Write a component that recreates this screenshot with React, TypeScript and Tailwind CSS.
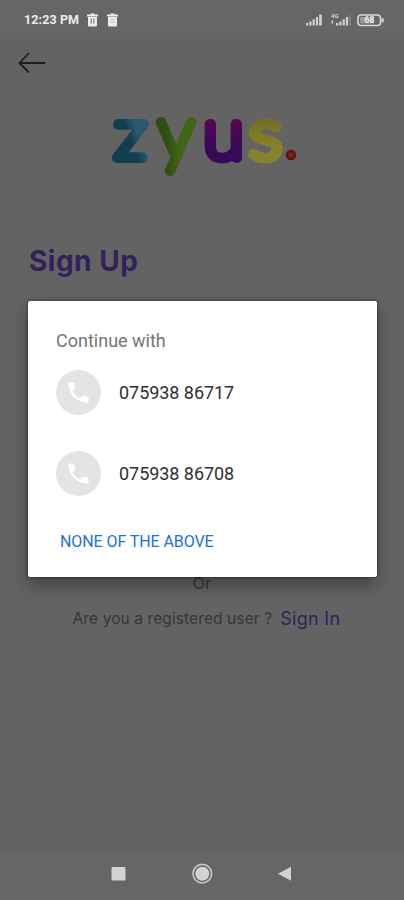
import React from 'react';
import { MdPhone } from 'react-icons/md';

interface AccountRowProps {
  number: string;
}

const AccountRow: React.FC<AccountRowProps> = ({ number }) => (
  <button className="flex h-[45px] w-full items-center gap-[18px] text-left">
    <span className="flex h-[45px] w-[45px] items-center justify-center rounded-full bg-[#e4e4e4]">
      <MdPhone size={27} className="text-white" />
    </span>
    <span className="whitespace-nowrap text-[18px] leading-6 tracking-[-0.05px] text-[#303030]">{number}</span>
  </button>
);

const TrashIcon: React.FC<{ filled?: boolean }> = ({ filled }) => (
  <svg width="13" height="14" viewBox="0 0 13 14" fill="#ececec">
    <path d="M4.5 0.5h4v1h3.5v2H1v-2h3.5zM2 4h9v8.2a1.3 1.3 0 0 1-1.3 1.3H3.3A1.3 1.3 0 0 1 2 12.2z" />
    {filled ? (
      <path d="M4 6.5h5M4 9h5" stroke="#bcbcbc" strokeWidth="0.8" />
    ) : (
      <path d="M5.2 5.5v5M7.8 5.5v5" stroke="#686868" strokeWidth="1" />
    )}
  </svg>
);

const StatusBar: React.FC = () => (
  <div className="flex h-[33px] shrink-0 items-center bg-[#666666] pt-[7px] pr-[20px] pl-[24px]">
    <span className="w-[62px] whitespace-nowrap text-[12.5px] font-bold tracking-[0.1px] text-[#ececec]">12:23 PM</span>
    <div className="flex items-center gap-[7px]">
      <TrashIcon />
      <TrashIcon filled />
    </div>
    <svg className="ml-auto" width="78" height="16" viewBox="0 0 78 16" fill="#d2d2d2">
      {/* sim 1 */}
      <path d="M0 11h2.2v2.5H0zM3.3 9.5h2.2v4H3.3zM6.6 7.3h2.2v6.2H6.6zM9.9 5h2.2v8.5H9.9zM13.2 2.5h2.6v11h-2.6z" />
      {/* sim 2 */}
      <text x="25" y="6" fontSize="6" fontWeight="700" fontFamily="Roboto, sans-serif">4G</text>
      <path d="M25.5 8.5h1.5v3h-1.5zM30 11h2.2v2.5H30zM33.3 9.5h2.2v4h-2.2zM36.6 7.3h2.2v6.2h-2.2zM39.9 5h2.2v8.5h-2.2z" />
      <path d="M43.2 3h1.5v10.5h-1.5z" fill="#858585" />
      {/* battery */}
      <rect x="52" y="3" width="22.5" height="10.5" rx="3" fill="none" stroke="#d8d8d8" strokeWidth="1.6" />
      <rect x="54" y="5" width="14" height="6.5" rx="1" fill="#989898" />
      <path d="M75.5 6h1.3l1 1v2.5l-1 1h-1.3z" />
      <text x="58.5" y="11.3" fontSize="8.5" fontWeight="700" fontFamily="Roboto, sans-serif" fill="#eeeeee">68</text>
    </svg>
  </div>
);

const Logo: React.FC = () => (
  <svg
    width="190"
    height="120"
    viewBox="0 -30 190 120"
    fontFamily="Lato, sans-serif"
    fontSize="70"
    fontWeight="100"
    strokeWidth="10"
    strokeLinejoin="round"
  >
    <defs>
      <linearGradient id="z" x1="0" y1="1" x2="1" y2="0">
        <stop offset="0.45" stopColor="#123f50" />
        <stop offset="0.6" stopColor="#2b596b" />
      </linearGradient>
      <linearGradient id="y" x1="0" y1="0" x2="1" y2="0">
        <stop offset="0.2" stopColor="#2f4d10" />
        <stop offset="0.6" stopColor="#416516" />
      </linearGradient>
      <linearGradient id="u" x1="0" y1="0" x2="0" y2="1">
        <stop offset="0.4" stopColor="#560752" />
        <stop offset="0.7" stopColor="#36095a" />
      </linearGradient>
      <linearGradient id="s" x1="0" y1="0" x2="0" y2="1">
        <stop offset="0.4" stopColor="#747125" />
        <stop offset="0.7" stopColor="#86822b" />
      </linearGradient>
      <radialGradient id="dot">
        <stop offset="0.1" stopColor="#8c2317" />
        <stop offset="1" stopColor="#4e100c" />
      </radialGradient>
    </defs>
    <text x="4.5" y="47.5" fill="url(#z)" stroke="url(#z)" textLength="32" lengthAdjust="spacingAndGlyphs">z</text>
    <text x="48.5" y="48" fontSize="74" fill="url(#y)" stroke="url(#y)" textLength="35" lengthAdjust="spacingAndGlyphs">y</text>
    <text x="93.5" y="47.5" fill="url(#u)" stroke="url(#u)" textLength="40" lengthAdjust="spacingAndGlyphs">u</text>
    <text x="139.5" y="47.5" fill="url(#s)" stroke="url(#s)" textLength="32" lengthAdjust="spacingAndGlyphs">s</text>
    <circle cx="181" cy="45" r="5.2" fill="url(#dot)" />
  </svg>
);

const NavBar: React.FC = () => (
  <div className="flex h-[50px] shrink-0 items-center justify-center bg-[#666666] pb-[2px]">
    <svg width="184" height="22" viewBox="0 0 184 22" fill="#d3d3d3">
      <rect x="1.5" y="4" width="14" height="13.5" rx="1" />
      <circle cx="92.3" cy="10.7" r="9.3" fill="none" stroke="#c8c8c8" strokeWidth="1.6" />
      <circle cx="92.3" cy="10.7" r="7" />
      <path d="M168 10.8L181 3.8v14z" />
    </svg>
  </div>
);

const App: React.FC = () => {
  return (
    <div className="relative flex h-[900px] w-[404px] flex-col overflow-hidden bg-[#636363] font-['Roboto',sans-serif]">
      <StatusBar />

      <main className="flex flex-1 flex-col">
        <button className="mt-[19px] ml-[18px] h-[22px] w-[28px]">
          <svg width="28" height="22" viewBox="0 0 28 22" fill="none" stroke="#1e1e1e" strokeWidth="1.8" strokeLinecap="round" strokeLinejoin="round">
            <path d="M10.5 1.5L1.5 11l9 9M1.5 11h25" />
          </svg>
        </button>

        <div className="mt-[6px] ml-[110px] h-[120px]">
          <Logo />
        </div>

        <h1 className="mt-[41px] ml-[29px] h-10 font-['Inter',sans-serif] text-[28px] leading-10 font-bold tracking-[0.5px] text-[#32215a]">
          Sign Up
        </h1>

        <div className="mt-[292px] flex flex-col items-center font-['Inter',sans-serif]">
          <span className="text-[16px] leading-5 tracking-[0.3px] text-[#363636]">Or</span>
          <p className="mt-4 flex items-center gap-[8px] pl-[9px] leading-5 whitespace-nowrap">
            <span className="text-[15.5px] tracking-[0.1px] text-[#363636]">Are you a registered user ?</span>
            <a className="text-[18px] tracking-[0.3px] text-[#32215a]">Sign In</a>
          </p>
        </div>
      </main>

      <NavBar />

      {/* Phone number picker */}
      <div
        role="dialog"
        className="absolute top-[301px] left-[28px] flex h-[276px] w-[349px] flex-col rounded-[2px] bg-white px-[28px] pt-[28px] shadow-[0_8px_18px_rgba(0,0,0,0.35),0_0_3px_rgba(0,0,0,0.6)]"
      >
        <h2 className="text-[18px] leading-6 text-[#757575]">Continue with</h2>
        <div className="mt-[17px] flex flex-col gap-9">
          <AccountRow number="075938 86717" />
          <AccountRow number="075938 86708" />
        </div>
        <button className="mt-[34px] ml-1 self-start text-[16px] leading-6 tracking-[-0.08px] whitespace-nowrap text-[#1a73d8]">
          NONE OF THE ABOVE
        </button>
      </div>
    </div>
  );
};

export default App;
